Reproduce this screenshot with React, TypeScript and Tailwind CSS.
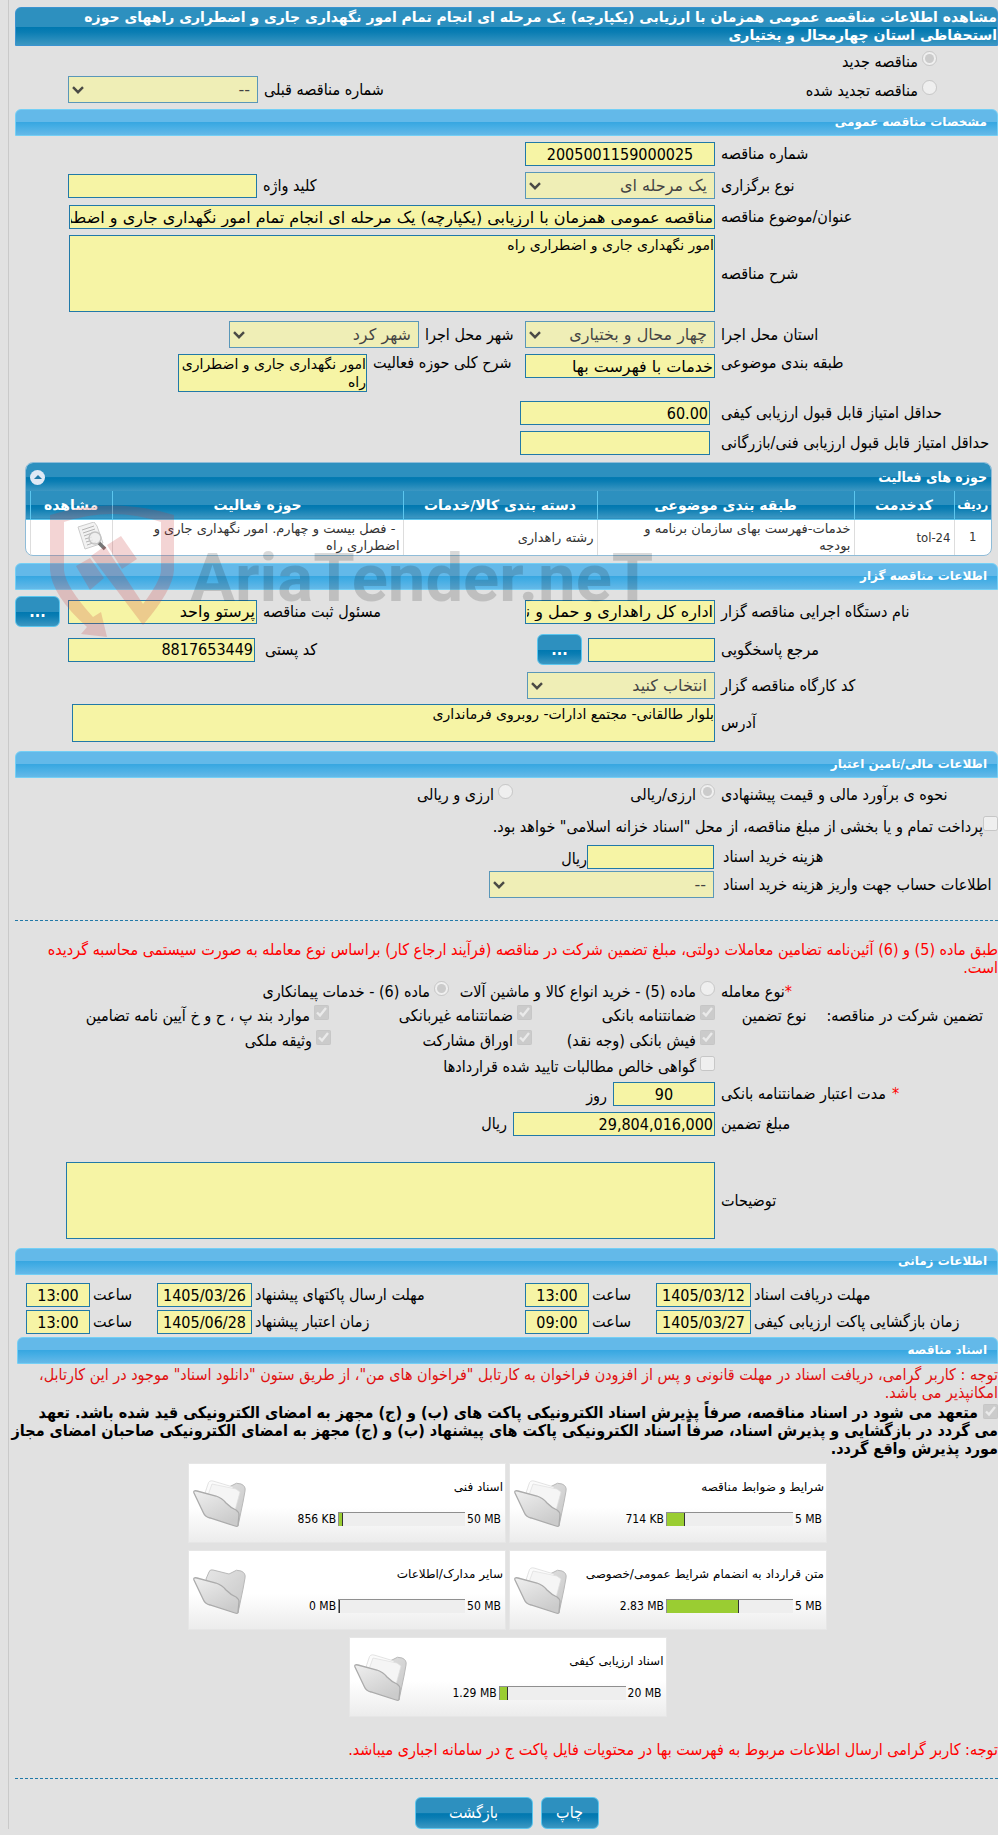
import React, { useId } from 'react';

const cx = (...parts: (string | undefined)[]) => parts.filter(Boolean).join(' ');

const FIELD = 'block shrink-0 rounded-none border border-[#2179a8] bg-[#f6f4a5] text-black outline-none';
const WIDE = "[font-family:'DejaVu_Sans',sans-serif]";

function Row({ className, gap = 'gap-1.5', children }: { className?: string; gap?: string; children: React.ReactNode }) {
  return <div className={cx('flex items-center', gap, className)}>{children}</div>;
}

function Label({ htmlFor, width = 'w-[277px]', children }: { htmlFor?: string; width?: string; children: React.ReactNode }) {
  return (
    <label htmlFor={htmlFor} className={cx('shrink-0 whitespace-nowrap text-left', width)}>
      {children}
    </label>
  );
}

function Field({ label, labelWidth, value = '', className }: { label: string; labelWidth?: string; value?: string; className: string }) {
  const id = useId();
  return (
    <>
      <Label htmlFor={id} width={labelWidth}>{label}</Label>
      <input id={id} type="text" readOnly value={value} className={cx(FIELD, 'h-6 px-px text-[16px] leading-5', className)} />
    </>
  );
}

function Area({ label, labelWidth, value = '', className }: { label: string; labelWidth?: string; value?: string; className: string }) {
  const id = useId();
  return (
    <>
      <Label htmlFor={id} width={labelWidth}>{label}</Label>
      <textarea id={id} readOnly value={value} className={cx(FIELD, WIDE, 'resize-none overflow-hidden p-0 text-[14px] leading-[18px]', className)} />
    </>
  );
}

function Select({ label, labelWidth, value, className }: { label: string; labelWidth?: string; value: string; className: string }) {
  const id = useId();
  return (
    <>
      <Label htmlFor={id} width={labelWidth}>{label}</Label>
      <div className={cx('relative shrink-0', className)}>
        <select
          id={id}
          disabled
          className={cx('block h-[27px] w-full appearance-none rounded-none border border-[#2179a8] bg-[#f6f4a5] pr-[7px] pl-5 text-[16px] leading-5 text-black opacity-70', WIDE)}
        >
          <option>{value}</option>
        </select>
        <svg className="pointer-events-none absolute top-2.5 left-1 h-2 w-3" viewBox="0 0 12 8" fill="none" stroke="#4a4a45" strokeWidth="2.4">
          <path d="M1 1.2 6 6.2 11 1.2" />
        </svg>
      </div>
    </>
  );
}

function Choice({ type, label, name, checked, className, gap = 'gap-1' }: {
  type: 'radio' | 'checkbox'; label: string; name?: string; checked?: boolean; className?: string; gap?: string;
}) {
  return (
    <label className={cx('flex shrink-0 items-start whitespace-nowrap', gap, className)}>
      <input type={type} name={name} disabled defaultChecked={checked} className="h-[15px] w-[15px] shrink-0" />
      <span className="pt-0.5 leading-[18px]">{label}</span>
    </label>
  );
}

function Section({ title, className }: { title: string; className?: string }) {
  return (
    <h2
      className={cx(
        'h-[27px] rounded-t-md border border-[#74cff5] bg-[linear-gradient(#63b9e9_0%,#63b9e9_48%,#38a7e1_50%,#44ade4_65%,#65b9e8_100%)] pr-[10px] text-[12px] leading-[25px] font-bold text-white',
        WIDE,
        className,
      )}
    >
      {title}
    </h2>
  );
}

const BLUE = 'bg-[linear-gradient(#2d90bf_0%,#2d90bf_50%,#0078b0_52%,#0a7db3_65%,#3c97c2_100%)]';

function BlueButton({ className, children, label }: { className: string; children: React.ReactNode; label?: string }) {
  return (
    <button type="button" aria-label={label} className={cx('shrink-0 rounded-md border border-[#5cc6ee] text-white', BLUE, className)}>
      {children}
    </button>
  );
}

function Folder({ filled }: { filled: boolean }) {
  return (
    <svg className="h-12 w-[54px] shrink-0" viewBox="0 0 54 48">
      <defs>
        <linearGradient id="folder-front" x1="0" y1="0" x2="0.6" y2="1">
          <stop offset="0" stopColor="#efefef" />
          <stop offset="1" stopColor="#cbcbcb" />
        </linearGradient>
        <linearGradient id="folder-back" x1="0" y1="0" x2="1" y2="1">
          <stop offset="0" stopColor="#e6e6e6" />
          <stop offset="1" stopColor="#c6c6c6" />
        </linearGradient>
      </defs>
      <path d="M13 12 16 5Q17 2 20 3L36 7 40 5Q43 2 48 4 53 6 52 11L50 22 45 46 40 44 20 30Z" fill="url(#folder-back)" stroke="#b9b9b9" strokeWidth="1" />
      {filled && (
        <>
          <path d="M12 13 15 4Q16 0 20 1L40 7 40 30 28 20Z" fill="#fbfbfb" stroke="#d9d9d9" strokeWidth="0.7" />
          <path d="M15 15 19 4 43 9 47 12 41 34 30 22Z" fill="#f5f5f5" stroke="#dedede" strokeWidth="0.7" />
        </>
      )}
      <path d="M1 13Q0 10 4 11L23 16Q29 18 33 23 38 28 43 30 46 32 46 35L45 45Q45 47 42 46L17 38Q12 37 10 32Z" fill="url(#folder-front)" stroke="#ababab" strokeWidth="1.3" />
    </svg>
  );
}

function FileCard({ title, used, limit, percent, filled = true }: { title: string; used: string; limit: string; percent: number; filled?: boolean }) {
  return (
    <a href="#" className="flex h-20 w-[318px] flex-row-reverse items-start border border-[#e6e6e6] bg-[linear-gradient(#ffffff_0%,#ffffff_55%,#ececec_100%)] pt-4 pl-1 text-[12px] text-black">
      <Folder filled={filled} />
      <div className="flex flex-1 flex-col gap-2 pr-0.5">
        <div className={cx('h-4 leading-[14px] whitespace-nowrap', WIDE)}>{title}</div>
        <div className="flex h-5 items-center gap-0.5 pr-0.5 pt-2.5 leading-4 whitespace-nowrap">
          <span dir="ltr">{limit}</span>
          <div role="progressbar" aria-label={title} aria-valuenow={percent} className="flex h-[14px] w-[127px] flex-row-reverse border-t border-l border-[#8f8f8f] bg-[#eeeeee]">
            <div className="h-full border-r border-[#333333] bg-[#9acd32]" style={{ width: `${percent}%` }} />
          </div>
          <span dir="ltr">{used}</span>
        </div>
      </div>
    </a>
  );
}

function Watermark() {
  return (
    <div aria-hidden="true" dir="ltr" className="pointer-events-none absolute top-[498px] left-[50px] flex">
      <svg className="h-[140px] w-[125px] shrink-0" viewBox="0 0 125 140">
        <g fill="#c83c3c" fillOpacity="0.22">
          <path d="M0 17Q62-2 124 17V72Q123 92 93 127L41 58 55 48 93 106Q111 82 111 72V24Q62 8 14 24V72Q15 88 43 119L51 114 57 139 31 136 37 129Q2 98 0 72Z" />
          <path d="M57 47 71 38 87 61 72 71Z" />
          <path d="M26 68 40 60 54 80 40 92Z" />
        </g>
      </svg>
      <span className="pt-[30px] pl-[15px] text-[67px] leading-[100px] font-bold whitespace-nowrap text-black/15 [font-family:Roboto,'Liberation_Sans',sans-serif]">
        AriaTender.neT
      </span>
    </div>
  );
}

const HEAD = 'h-7 border-l border-[#5cc6ee] text-center font-bold text-white';
const CELL = 'h-9 border-l border-[#dddddd] pr-[3px] py-0 text-right leading-[17px]';

export default function App() {
  return (
    <div
      dir="rtl"
      lang="fa"
      className="relative min-h-screen overflow-hidden bg-[#e1e1e1] pb-1.5 pl-2 text-[16px] leading-[18px] text-black [font-family:'DejaVu_Sans_Condensed','DejaVu_Sans',sans-serif]"
    >
      <main className="border-l border-[#c9c9c9] pt-[7px] pl-1.5">
        <h1 className={cx('h-[39px] rounded-t-md border border-[#3a93d0] text-[14px] leading-[18px] font-bold whitespace-nowrap text-white', BLUE, WIDE)}>
          مشاهده اطلاعات مناقصه عمومی همزمان با ارزیابی (یکپارچه) یک مرحله ای انجام تمام امور نگهداری جاری و اضطراری راههای حوزه
          <br />
          استحفاظی استان چهارمحال و بختیاری
        </h1>
        <div className="flex h-[30px] items-center pr-[61px]">
          <Choice type="radio" name="kind" label="مناقصه جدید" checked />
        </div>
        <Row className="h-[27px]">
          <div className="w-[467px] shrink-0 pr-[61px]">
            <Choice type="radio" name="kind" label="مناقصه تجدید شده" />
          </div>
          <Select label="شماره مناقصه قبلی" labelWidth="w-[261px]" value="--" className="w-[190px]" />
        </Row>

        <Section title="مشخصات مناقصه عمومی" className="mt-1.5" />
        <div className="flex flex-col gap-1.5 pt-1.5">
          <Row><Field label="شماره مناقصه" value="2005001159000025" className="w-[190px] text-center" /></Row>
          <Row>
            <Select label="نوع برگزاری" value="یک مرحله ای" className="w-[190px]" />
            <Field label="کلید واژه" labelWidth="w-[256px]" className="w-[189px]" />
          </Row>
          <Row>
            <Field
              label="عنوان/موضوع مناقصه"
              value="مناقصه عمومی همزمان با ارزیابی (یکپارچه) یک مرحله ای انجام تمام امور نگهداری جاری و اضطراری راههای حوزه استحفاظی استان چهارمحال و بختیاری"
              className={cx('w-[646px]', WIDE)}
            />
          </Row>
          <Row><Area label="شرح مناقصه" value="امور نگهداری جاری و اضطراری راه" className="h-[77px] w-[646px]" /></Row>
        </div>
        <div className="flex flex-col gap-1.5 pt-[9px]">
          <Row>
            <Select label="استان محل اجرا" value="چهار محال و بختیاری" className="w-[190px]" />
            <Select label="شهر محل اجرا" labelWidth="w-[94px]" value="شهر کرد" className="w-[190px]" />
          </Row>
          <Row className="items-start">
            <Field label="طبقه بندی موضوعی" value="خدمات با فهرست بها" className={cx('w-[190px]', WIDE)} />
            <Area label="شرح کلی حوزه فعالیت" labelWidth="w-[146px]" value="امور نگهداری جاری و اضطراری راه" className="h-[38px] w-[189px]" />
          </Row>
        </div>
        <div className="flex flex-col gap-1.5 pt-[9px]">
          <Row gap="gap-[11px]"><Field label="حداقل امتیاز قابل قبول ارزیابی کیفی" value="60.00" className="w-[190px]" /></Row>
          <Row gap="gap-[11px]"><Field label="حداقل امتیاز قابل قبول ارزیابی فنی/بازرگانی" className="w-[190px]" /></Row>
        </div>

        <section className="mt-[7px] mr-1.5 ml-2.5 overflow-hidden rounded-lg border border-[#8fbcd8] bg-white">
          <div className={cx('flex h-7 items-center justify-between px-1 text-[14px] font-bold text-white', BLUE)}>
            <h2>حوزه های فعالیت</h2>
            <button type="button" aria-label="جمع کردن" className="flex h-[15px] w-[15px] items-center justify-center rounded-full bg-[#dfe9f5]">
              <svg viewBox="0 0 8 4" className="h-1 w-2" fill="#2179a8"><path d="M0 4 4 0 8 4Z" /></svg>
            </button>
          </div>
          <table className="w-full table-fixed border-collapse text-[13px] text-[#333333]">
            <thead>
              <tr className={cx('border-b border-[#5cc6ee] text-[14px]', BLUE)}>
                <th className={cx(HEAD, 'w-[37px] p-0 text-[13px]')}>ردیف</th>
                <th className={cx(HEAD, WIDE, 'w-[100px]')}>کدخدمت</th>
                <th className={cx(HEAD, WIDE, 'w-[257px]')}>طبقه بندی موضوعی</th>
                <th className={cx(HEAD, WIDE, 'w-[194px]')}>دسته بندی کالا/خدمات</th>
                <th className={cx(HEAD, WIDE)}>حوزه فعالیت</th>
                <th className={cx(HEAD, WIDE, 'w-[82px]')}>مشاهده</th>
                <td className="w-1" />
              </tr>
            </thead>
            <tbody>
              <tr>
                <td className="h-9 border-l border-[#dddddd] text-center">1</td>
                <td className={CELL}>tol-24</td>
                <td className={cx(CELL, WIDE, 'pl-8')}>خدمات-فهرست بهای سازمان برنامه و بودجه</td>
                <td className={cx(CELL, WIDE)}>رشته راهداری</td>
                <td className={cx(CELL, WIDE, 'pl-8')}>&nbsp;- فصل بیست و چهارم. امور نگهداری جاری و اضطراری راه</td>
                <td className="border-l border-[#dddddd] p-0">
                  <button type="button" aria-label="مشاهده" className="mr-0.5 block">
                    <svg className="h-[30px] w-[34px]" viewBox="0 0 34 30">
                      <path d="M2 5 18 0 21 4 27 21 9 27Z" fill="#f2f2f2" stroke="#cccccc" />
                      <path d="M6 8 18 4M7 11 19 7M8 14 16 11M9 17 16 15M10 20 17 18M11 23 20 20" stroke="#b5b5b5" />
                      <circle cx="19" cy="16" r="6" fill="#eeeeee" fillOpacity="0.8" stroke="#c4c4c4" strokeWidth="1.5" />
                      <path d="M23 21 29 27" stroke="#777777" strokeWidth="3.5" />
                    </svg>
                  </button>
                </td>
                <td />
              </tr>
            </tbody>
          </table>
        </section>

        <Section title="اطلاعات مناقصه گزار" className="mt-[7px]" />
        <div className="flex flex-col gap-[7px] pt-1.5">
          <Row className="h-[31px]">
            <Field label="نام دستگاه اجرایی مناقصه گزار" value="اداره کل راهداری و حمل و نقل جاده ای استان چهارمحال و بختیاری" className={cx('w-[190px]', WIDE)} />
            <Field label="مسئول ثبت مناقصه" labelWidth="w-[256px]" value="پرستو واحد" className={cx('w-[189px]', WIDE)} />
            <BlueButton label="انتخاب مسئول" className="mr-0.5 h-[31px] w-[45px] font-bold">...</BlueButton>
          </Row>
          <Row className="h-[31px]">
            <Field label="مرجع پاسخگویی" className="w-[127px]" />
            <BlueButton label="انتخاب مرجع" className="h-[31px] w-[45px] font-bold">...</BlueButton>
            <Field label="کد پستی" labelWidth="w-[266px]" value="8817653449" className="mr-1 w-[187px]" />
          </Row>
          <Row><Select label="کد کارگاه مناقصه گزار" value="انتخاب کنید" className="w-[188px]" /></Row>
        </div>
        <Row className="pt-[5px]">
          <Area label="آدرس" value="بلوار طالقانی- مجتمع ادارات- روبروی فرمانداری" className="h-[38px] w-[643px]" />
        </Row>

        <Section title="اطلاعات مالی/تامین اعتبار" className="mt-[9px]" />
        <Row className="mt-1.5 h-5 items-start">
          <div className="w-[277px] shrink-0 pt-0.5 text-left whitespace-nowrap">نحوه ی برآورد مالی و قیمت پیشنهادی</div>
          <Choice type="radio" name="currency" label="ارزی/ریالی" checked className="w-[196px]" />
          <Choice type="radio" name="currency" label="ارزی و ریالی" />
        </Row>
        <Choice type="checkbox" gap="gap-0" className="mt-3 h-7" label={'پرداخت تمام و یا بخشی از مبلغ مناقصه، از محل "اسناد خزانه اسلامی" خواهد بود.'} />
        <Row gap="gap-0" className="mt-px">
          <Field label="هزینه خرید اسناد" labelWidth="w-[275px] ml-[9px]" className="w-[127px]" />
          <span className="pt-1">ریال</span>
        </Row>
        <Row gap="gap-0" className="mt-0.5">
          <Select label="اطلاعات حساب جهت واریز هزینه خرید اسناد" labelWidth="w-[275px] ml-[9px]" value="--" className="w-[225px]" />
        </Row>
        <hr className="mt-[22px] border-t border-dashed border-[#2179a8]" />
        <p className="mt-5 whitespace-nowrap text-[#ff0000]">
          طبق ماده (5) و (6) آئین‌نامه تضامین معاملات دولتی، مبلغ تضمین شرکت در مناقصه (فرآیند ارجاع کار) براساس نوع معامله به صورت سیستمی محاسبه گردیده
          <br />
          است.
        </p>
        <Row className="mt-1 h-6 items-start">
          <div className="w-[277px] shrink-0 pt-0.5 text-left"><span className="text-[#ff0000]">*</span>نوع معامله</div>
          <Choice type="radio" name="deal" label="ماده (5) - خرید انواع کالا و ماشین آلات" className="w-[260px]" />
          <Choice type="radio" name="deal" label="ماده (6) - خدمات پیمانکاری" checked />
        </Row>
        <div className="flex">
          <div className="flex w-[283px] shrink-0 gap-5 pt-0.5 pr-[15px] whitespace-nowrap">
            <span>تضمین شرکت در مناقصه:</span>
            <span>نوع تضمین</span>
          </div>
          <div className="flex flex-col">
            <div className="flex h-[25px]">
              <Choice type="checkbox" label="ضمانتنامه بانکی" checked className="w-[183px]" />
              <Choice type="checkbox" label="ضمانتنامه غیربانکی" checked className="w-[203px]" />
              <Choice type="checkbox" label="موارد بند پ ، ح و خ آیین نامه تضامین" checked />
            </div>
            <div className="flex h-[26px]">
              <Choice type="checkbox" label="فیش بانکی (وجه نقد)" checked className="w-[183px]" />
              <Choice type="checkbox" label="اوراق مشارکت" checked className="w-[201px]" />
              <Choice type="checkbox" label="وثیقه ملکی" checked />
            </div>
            <div className="flex h-6">
              <Choice type="checkbox" label="گواهی خالص مطالبات تایید شده قراردادها" />
            </div>
          </div>
        </div>
        <Row className="mt-0.5">
          <div className="flex w-[277px] shrink-0 items-center justify-end gap-1.5">
            <span className="text-[#ff0000]">*</span>
            <label htmlFor="validity" className="whitespace-nowrap">مدت اعتبار ضمانتنامه بانکی</label>
          </div>
          <input id="validity" readOnly value="90" className={cx(FIELD, 'h-6 w-[102px] text-center text-[16px]')} />
          <span className="pt-1">روز</span>
        </Row>
        <Row className="mt-1.5">
          <Field label="مبلغ تضمین" value="29,804,016,000" className="w-[202px]" />
          <span>ریال</span>
        </Row>
        <Row className="mt-[26px]"><Area label="توضیحات" className="h-[77px] w-[649px]" /></Row>

        <Section title="اطلاعات زمانی" className="mt-[9px]" />
        <div className="flex flex-col gap-[3px] pt-2 pb-[3px]">
          <Row gap="gap-[3px]">
            <Field label="مهلت دریافت اسناد" labelWidth="w-[244px]" value="1405/03/12" className="w-[95px] text-center" />
            <Field label="ساعت" labelWidth="w-[61px]" value="13:00" className="w-16 text-center" />
            <Field label="مهلت ارسال پاکتهای پیشنهاد" labelWidth="w-[267px]" value="1405/03/26" className="w-[95px] text-center" />
            <Field label="ساعت" labelWidth="w-[61px]" value="13:00" className="w-16 text-center" />
          </Row>
          <Row gap="gap-[3px]">
            <Field label="زمان بازگشایی پاکت ارزیابی کیفی" labelWidth="w-[244px]" value="1405/03/27" className="w-[95px] text-center" />
            <Field label="ساعت" labelWidth="w-[61px]" value="09:00" className="w-16 text-center" />
            <Field label="زمان اعتبار پیشنهاد" labelWidth="w-[267px]" value="1405/06/28" className="w-[95px] text-center" />
            <Field label="ساعت" labelWidth="w-[61px]" value="13:00" className="w-16 text-center" />
          </Row>
        </div>

        <Section title="اسناد مناقصه" className="ml-0.5" />
        <p className="pt-0.5 whitespace-nowrap text-[#e01010]">
          توجه : کاربر گرامی، دریافت اسناد در مهلت قانونی و پس از افزودن فراخوان به کارتابل "فراخوان های من"، از طریق ستون "دانلود اسناد" موجود در این کارتابل،
          <br />
          امکانپذیر می باشد.
        </p>
        <label className="mt-0.5 block leading-[18px] font-bold whitespace-nowrap">
          <input type="checkbox" disabled defaultChecked className="ml-[5px] h-[15px] w-[15px] align-[-1px]" />
          متعهد می شود در اسناد مناقصه، صرفاً پذیرش اسناد الکترونیکی پاکت های (ب) و (ج) مجهز به امضای الکترونیکی قید شده باشد. تعهد
          <br />
          می گردد در بازگشایی و پذیرش اسناد، صرفاً اسناد الکترونیکی پاکت های پیشنهاد (ب) و (ج) مجهز به امضای الکترونیکی صاحبان امضای مجاز
          <br />
          مورد پذیرش واقع گردد.
        </label>

        <div className="mt-[5px] mr-[171px] flex w-[639px] flex-wrap justify-center gap-x-[3px] gap-y-[7px]">
          <FileCard title="شرایط و ضوابط مناقصه" used="714 KB" limit="5 MB" percent={14} />
          <FileCard title="اسناد فنی" used="856 KB" limit="50 MB" percent={3} />
          <FileCard title="متن قرارداد به انضمام شرایط عمومی/خصوصی" used="2.83 MB" limit="5 MB" percent={57} />
          <FileCard title="سایر مدارک/اطلاعات" used="0 MB" limit="50 MB" percent={0} filled={false} />
          <FileCard title="اسناد ارزیابی کیفی" used="1.29 MB" limit="20 MB" percent={7} />
        </div>

        <p className="mt-6 whitespace-nowrap text-[#ff0000]">
          توجه: کاربر گرامی ارسال اطلاعات مربوط به فهرست بها در محتویات فایل پاکت ج در سامانه اجباری میباشد.
        </p>
        <hr className="mt-[19px] border-t border-dashed border-[#2179a8]" />
        <div className="flex justify-center gap-2 pt-[18px]">
          <BlueButton className="h-8 w-[58px]">چاپ</BlueButton>
          <BlueButton className="h-8 w-[118px]">بازگشت</BlueButton>
        </div>
      </main>
      <Watermark />
    </div>
  );
}
